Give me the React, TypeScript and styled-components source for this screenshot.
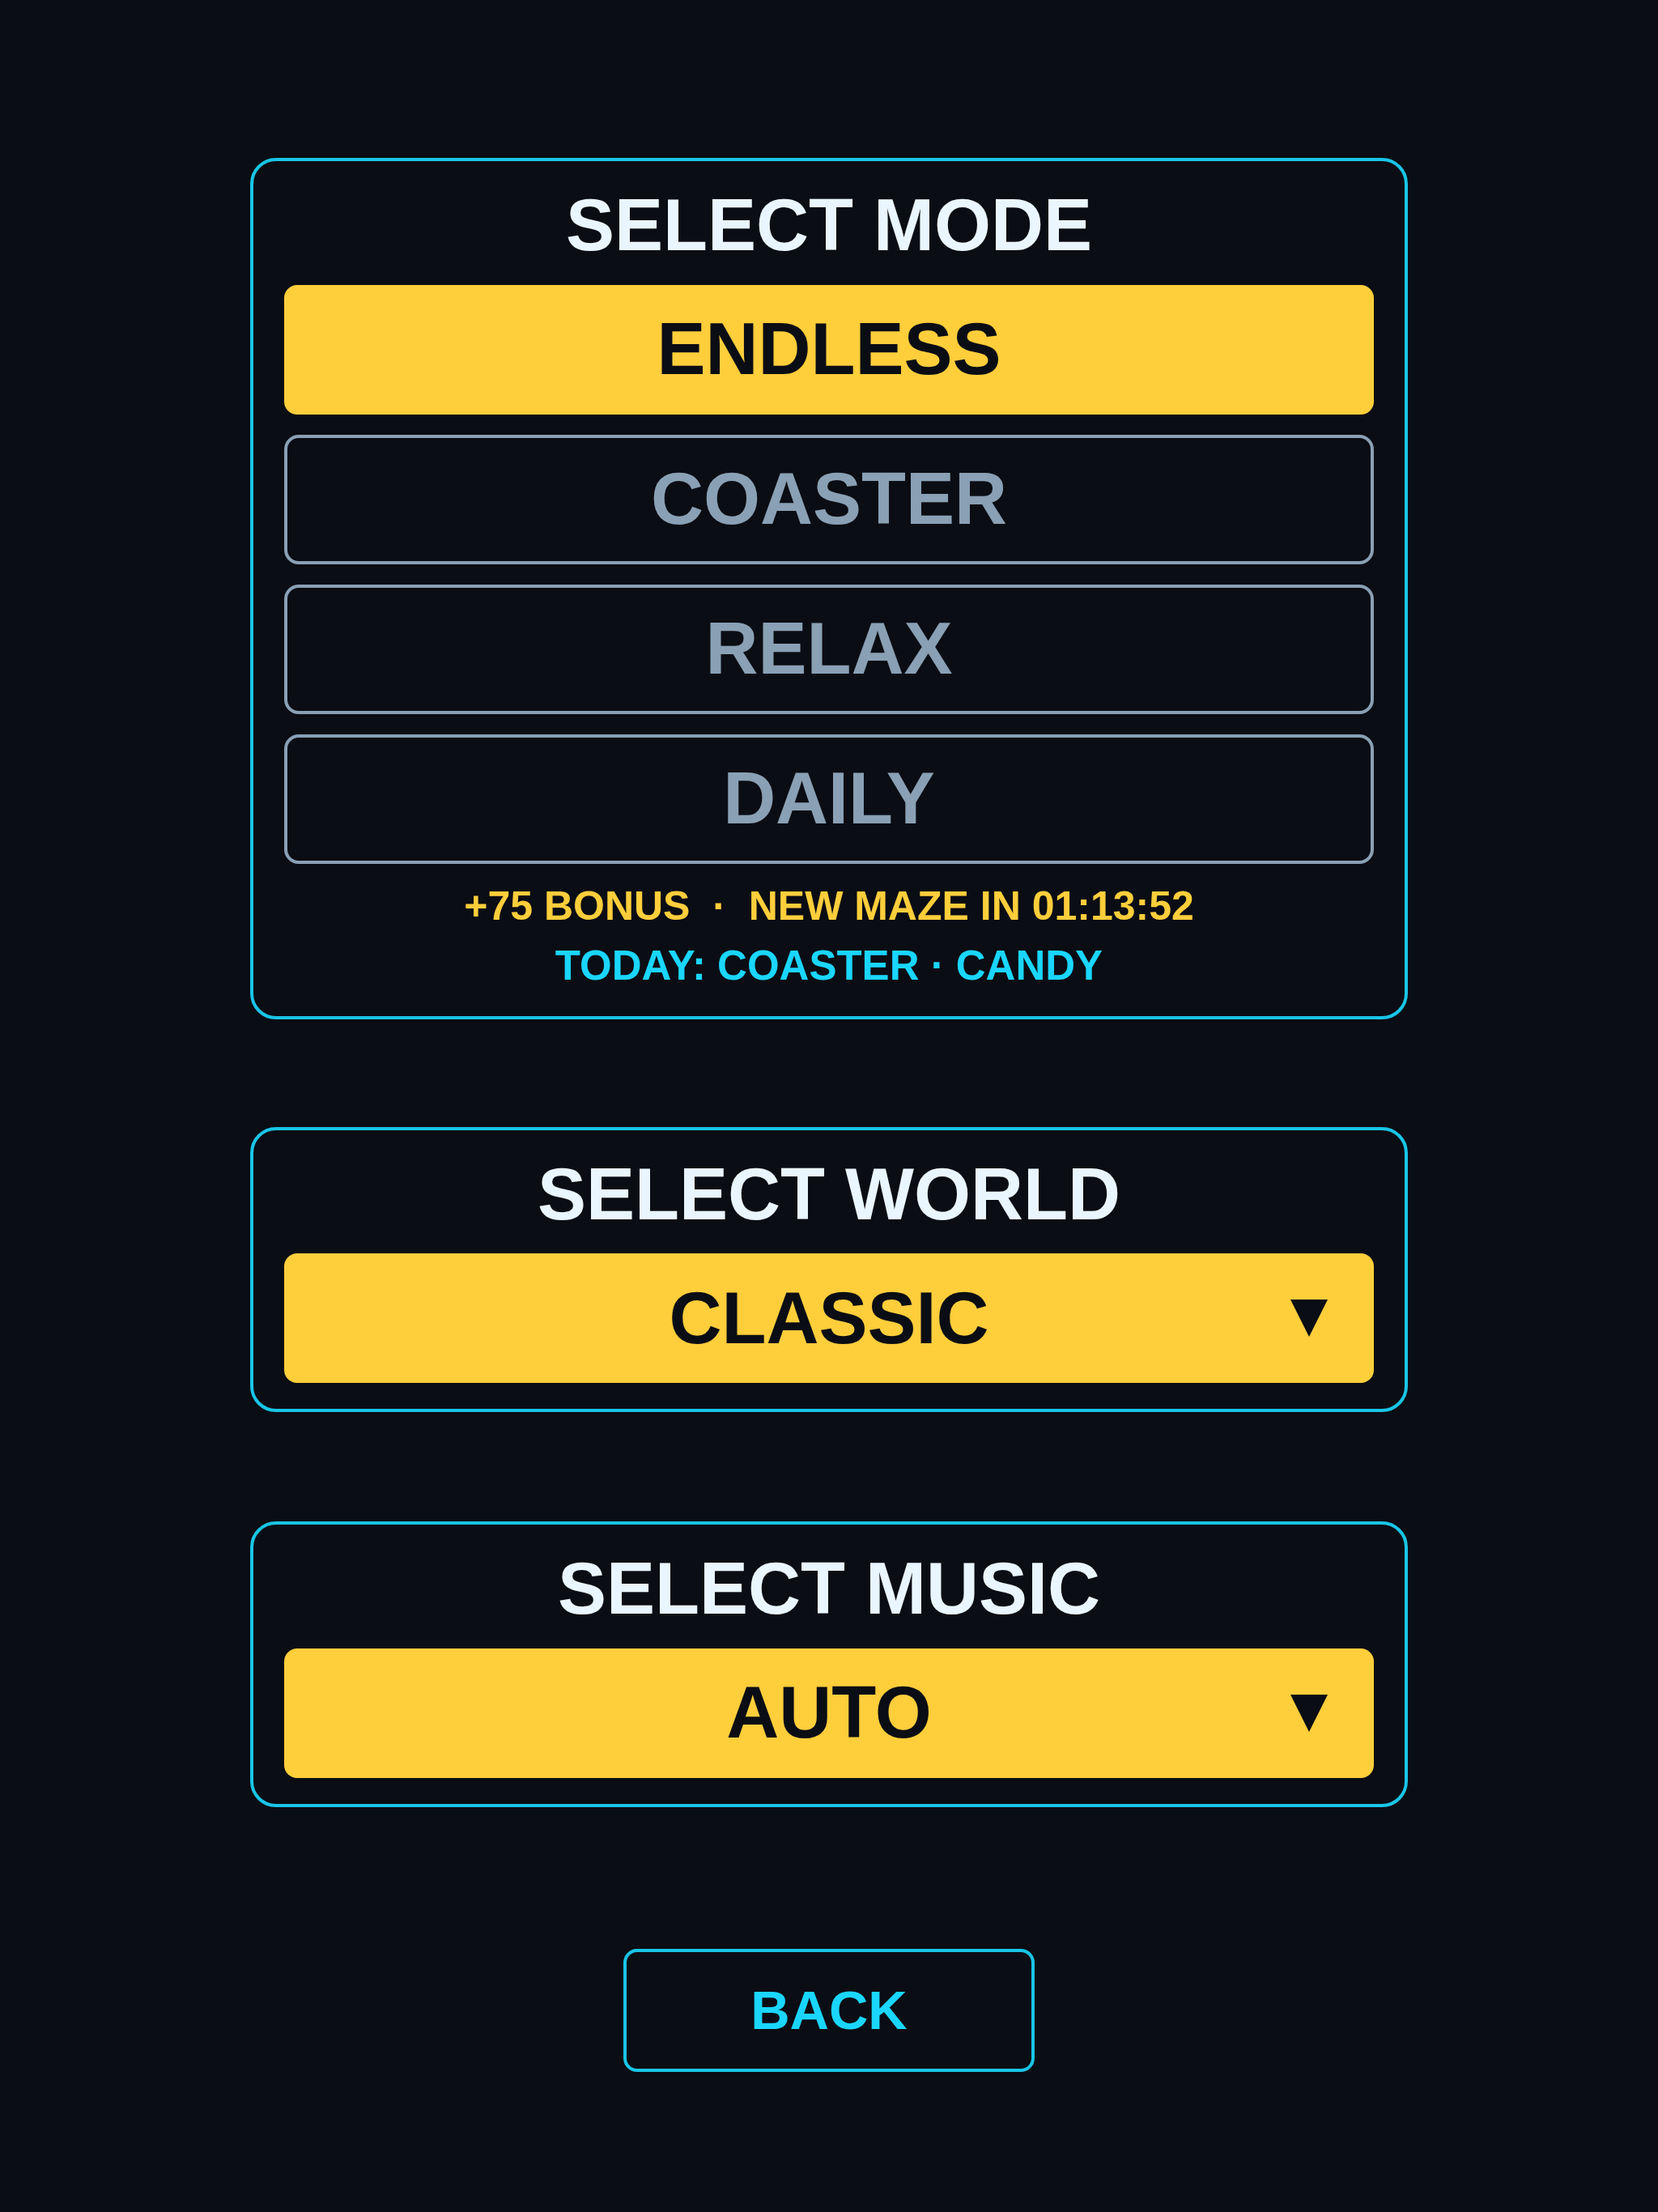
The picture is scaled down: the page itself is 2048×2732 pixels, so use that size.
import React, { useState } from 'react'
import styled, { createGlobalStyle } from 'styled-components'

const GlobalStyle = createGlobalStyle`
  html, body {
    margin: 0;
    padding: 0;
    background: #0b0d14;
  }
  body {
    font-family: 'Liberation Sans', Arial, sans-serif;
    -webkit-font-smoothing: antialiased;
  }
`

const Screen = styled.div`
  min-height: 2732px;
  display: flex;
  flex-direction: column;
  align-items: center;
  padding-top: 195px;
  box-sizing: border-box;
  background: #0b0d14;
`

const Panel = styled.section<{ $gapAfter?: number }>`
  width: 1430px;
  box-sizing: border-box;
  border: 4px solid #19c5e6;
  border-radius: 32px;
  padding: 28px 38px 32px;
  display: flex;
  flex-direction: column;
  margin-bottom: ${(p) => p.$gapAfter ?? 0}px;
`

const Title = styled.h2`
  margin: 0 0 21px;
  font-size: 90px;
  line-height: 1.15;
  font-weight: 700;
  color: #eaf6ff;
  text-align: center;
`

const ModeList = styled.div`
  display: flex;
  flex-direction: column;
  gap: 25px;
`

const ModeButton = styled.button<{ $active?: boolean }>`
  height: 160px;
  box-sizing: border-box;
  border-radius: ${(p) => (p.$active ? 16 : 18)}px;
  border: ${(p) => (p.$active ? 'none' : '4px solid #8aa0b4')};
  background: ${(p) => (p.$active ? '#ffce3b' : 'transparent')};
  color: ${(p) => (p.$active ? '#0b0d14' : '#8aa0b4')};
  font-family: inherit;
  font-size: 90px;
  font-weight: 700;
  display: flex;
  align-items: center;
  justify-content: center;
  padding: 0;
  cursor: pointer;
`

const InfoLine = styled.div<{ $tone: 'gold' | 'cyan'; $top: number }>`
  margin-top: ${(p) => p.$top}px;
  font-size: ${(p) => (p.$tone === 'gold' ? 50 : 51)}px;
  line-height: 1.15;
  font-weight: 700;
  text-align: center;
  white-space: pre;
  color: ${(p) => (p.$tone === 'gold' ? '#ffce3b' : '#1ad6ff')};
`

const Select = styled.button`
  height: 160px;
  border: none;
  border-radius: 16px;
  background: #ffce3b;
  color: #0b0d14;
  font-family: inherit;
  font-size: 90px;
  font-weight: 700;
  display: grid;
  grid-template-columns: 1fr auto 1fr;
  align-items: center;
  padding: 0 57px;
  cursor: pointer;
`

const SelectLabel = styled.span`
  grid-column: 2;
`

const Caret = styled.svg`
  grid-column: 3;
  justify-self: end;
  width: 46px;
  height: 46px;
`

const BackButton = styled.button`
  width: 508px;
  height: 152px;
  box-sizing: border-box;
  border: 4px solid #19c5e6;
  border-radius: 17px;
  background: transparent;
  color: #1ad6ff;
  font-family: inherit;
  font-size: 67px;
  font-weight: 700;
  cursor: pointer;
`

const modes = ['ENDLESS', 'COASTER', 'RELAX', 'DAILY']

const Dropdown: React.FC<{ value: string }> = ({ value }) => (
  <Select>
    <SelectLabel>{value}</SelectLabel>
    <Caret viewBox="0 0 46 46">
      <polygon points="0,0 46,0 23,46" fill="#0b0d14" />
    </Caret>
  </Select>
)

const App: React.FC = () => {
  const [mode, setMode] = useState('ENDLESS')

  return (
    <>
      <GlobalStyle />
      <Screen>
        <Panel $gapAfter={133}>
          <Title>SELECT MODE</Title>
          <ModeList>
            {modes.map((m) => (
              <ModeButton key={m} $active={m === mode} onClick={() => setMode(m)}>
                {m}
              </ModeButton>
            ))}
          </ModeList>
          <InfoLine $tone="gold" $top={24}>
            {'+75 BONUS\u00a0\u00a0·\u00a0\u00a0NEW MAZE IN 01:13:52'}
          </InfoLine>
          <InfoLine $tone="cyan" $top={16}>
            TODAY: COASTER · CANDY
          </InfoLine>
        </Panel>

        <Panel $gapAfter={135}>
          <Title>SELECT WORLD</Title>
          <Dropdown value="CLASSIC" />
        </Panel>

        <Panel $gapAfter={175}>
          <Title>SELECT MUSIC</Title>
          <Dropdown value="AUTO" />
        </Panel>

        <BackButton>BACK</BackButton>
      </Screen>
    </>
  )
}

export default App
